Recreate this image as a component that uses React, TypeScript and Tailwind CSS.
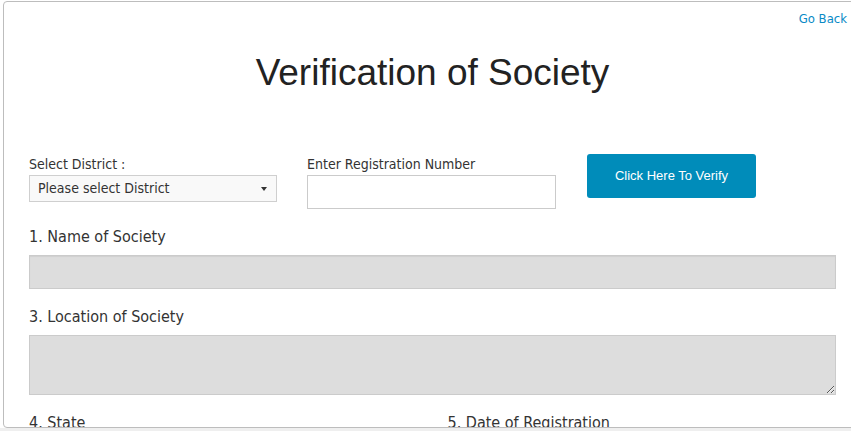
import React from "react";

const ui = "font-['DejaVu_Sans_Condensed','DejaVu_Sans',sans-serif]";

export default function App(): React.JSX.Element {
  return (
    <div className={`flex h-[431px] w-full flex-col overflow-hidden bg-white ${ui}`}>
      <div className="ml-[3px] mt-[1px] mr-[-12px] h-[427px] shrink-0 overflow-hidden rounded-[4px] border border-[#bdbdbd] bg-white pl-[25px] pr-[26px]">
        <div className="pt-[4px] text-right">
          <a className="mr-[-11px] text-[13px] leading-[18px] text-[#0a8ac6]" href="#">
            Go Back
          </a>
        </div>

        <h1 className="mt-[23px] text-center font-['Liberation_Sans',Arial,sans-serif] text-[37px] leading-[40px] text-[#222]">
          Verification of Society
        </h1>

        <div className="mt-[60px] flex items-start">
          <div className="w-[248px]">
            <label className="block text-[14px] leading-[22px] text-[#333]">Select District :</label>
            <div className="flex h-[27px] items-center justify-between border border-[#cfcfcf] bg-[#f9f9f9] pl-[8px] pr-[9px] text-[14px] text-[#333]">
              <span>Please select District</span>
              <span className="h-0 w-0 border-x-[3.5px] border-t-[4px] border-x-transparent border-t-[#333]" />
            </div>
          </div>
          <div className="ml-[30px] w-[249px]">
            <label className="block text-[14px] leading-[22px] text-[#333]">Enter Registration Number</label>
            <input className="block h-[34px] w-full border border-[#cbcbcb] bg-white outline-none" />
          </div>
          <button className="ml-[31px] mt-[1px] h-[44px] w-[169px] rounded-[3px] bg-[#008cba] font-['Liberation_Sans',Arial,sans-serif] text-[13px] text-white">
            Click Here To Verify
          </button>
        </div>

        <label className="mt-[17px] block text-[16px] leading-[22px] text-[#333]">1. Name of Society</label>
        <input
          readOnly
          className="mt-[7px] block h-[34px] w-full border border-[#cbcbcb] bg-[#dddddd] shadow-[inset_0_1px_1px_rgba(0,0,0,0.06)] outline-none"
        />

        <label className="mt-[17px] block text-[16px] leading-[22px] text-[#333]">3. Location of Society</label>
        <textarea
          readOnly
          className="mt-[7px] block h-[60px] w-full resize-y border border-[#cbcbcb] bg-[#dddddd] outline-none"
        />

        <div className="mt-[17px] grid grid-cols-2 gap-[30px]">
          <label className="block text-[16px] leading-[22px] text-[#333]">4. State</label>
          <label className="block text-[16px] leading-[22px] text-[#333]">5. Date of Registration</label>
        </div>
      </div>
      <div className="flex-1 bg-[#efefef]" />
    </div>
  );
}
